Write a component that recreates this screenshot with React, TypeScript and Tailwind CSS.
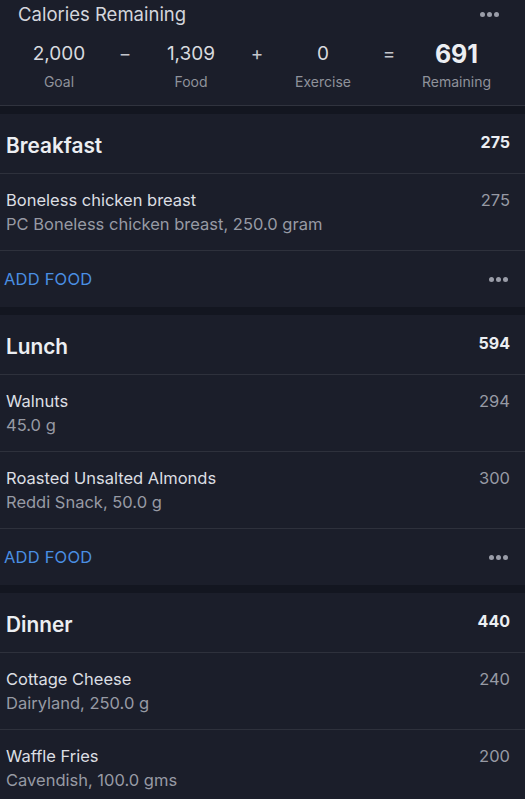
import React from "react";

const font = { fontFamily: "Inter, 'Noto Sans', sans-serif" };

function Dots({ className = "" }: { className?: string }) {
  return (
    <div className={"flex items-center gap-[2px] " + className}>
      <span className="block h-[5px] w-[5px] rounded-full bg-[#9a9da8]" />
      <span className="block h-[5px] w-[5px] rounded-full bg-[#9a9da8]" />
      <span className="block h-[5px] w-[5px] rounded-full bg-[#9a9da8]" />
    </div>
  );
}

type Item = { name: string; sub: string; cal: number };
type Meal = { title: string; total: number; items: Item[]; addFood: boolean };

const meals: Meal[] = [
  {
    title: "Breakfast",
    total: 275,
    items: [{ name: "Boneless chicken breast", sub: "PC Boneless chicken breast, 250.0 gram", cal: 275 }],
    addFood: true,
  },
  {
    title: "Lunch",
    total: 594,
    items: [
      { name: "Walnuts", sub: "45.0 g", cal: 294 },
      { name: "Roasted Unsalted Almonds", sub: "Reddi Snack, 50.0 g", cal: 300 },
    ],
    addFood: true,
  },
  {
    title: "Dinner",
    total: 440,
    items: [
      { name: "Cottage Cheese", sub: "Dairyland, 250.0 g", cal: 240 },
      { name: "Waffle Fries", sub: "Cavendish, 100.0 gms", cal: 200 },
    ],
    addFood: false,
  },
];

function Summary() {
  const cols: { v: string; l?: string; op?: boolean; bold?: boolean }[] = [
    { v: "2,000", l: "Goal" },
    { v: "−", op: true },
    { v: "1,309", l: "Food" },
    { v: "+", op: true },
    { v: "0", l: "Exercise" },
    { v: "=", op: true },
    { v: "691", l: "Remaining", bold: true },
  ];
  return (
    <div className="bg-[#1b1e2a] border-b border-[#30333e]">
      <div className="flex items-start justify-between pl-[18px] pr-[26px] pt-[2px]">
        <div className="text-[18.5px] leading-[24px] text-[#d4d6dc]">Calories Remaining</div>
        <Dots className="mt-[10px]" />
      </div>
      <div className="flex pl-[26px] pr-[34px] pt-[14px] pb-[13px]">
        {cols.map((c, i) => (
          <div key={i} className="flex-1 flex flex-col items-center">
            {c.bold ? (
              <div className="text-[25px] leading-[28px] font-bold text-[#eceef2]">{c.v}</div>
            ) : (
              <div
                className={
                  "text-[19px] leading-[28px] " + (c.op ? "text-[#c4c6cc]" : "text-[#d8dadf]")
                }
              >
                {c.v}
              </div>
            )}
            {c.l && (
              <div className="mt-[4px] text-[14px] leading-[20px] text-[#8f929b]">{c.l}</div>
            )}
          </div>
        ))}
      </div>
    </div>
  );
}

function MealCard({ meal }: { meal: Meal }) {
  return (
    <div className="bg-[#1b1e2a] mt-[8px]">
      <div className="flex h-[60px] items-center justify-between pl-[6px] pr-[15px] border-b border-[#2e313c]">
        <div className="pt-[4px] text-[20.8px] leading-[28px] font-semibold text-[#eceef2]">{meal.title}</div>
        <div className="pb-[4px] text-[16px] leading-[24px] font-bold text-[#eceef2]">{meal.total}</div>
      </div>
      {meal.items.map((it, i) => (
        <div
          key={i}
          className="flex justify-between pl-[6px] pr-[15px] pt-[14px] pb-[14px] border-b border-[#2e313c]"
        >
          <div>
            <div className="text-[16.5px] leading-[24px] text-[#dcdee3]">{it.name}</div>
            <div className="text-[16.5px] leading-[24px] text-[#979aa4]">{it.sub}</div>
          </div>
          <div className="text-[16.5px] leading-[24px] text-[#979aa4]">{it.cal}</div>
        </div>
      ))}
      {meal.addFood && (
        <div className="flex h-[56px] items-center justify-between pl-[4px] pr-[17px]">
          <div className="text-[16.5px] leading-[24px] text-[#4a8fe2] tracking-[0.2px]">ADD FOOD</div>
          <Dots className="pt-[1px]" />
        </div>
      )}
    </div>
  );
}

export default function App() {
  return (
    <div className="w-[525px] h-[799px] overflow-hidden bg-[#131620]" style={font}>
      <Summary />
      {meals.map((m) => (
        <MealCard key={m.title} meal={m} />
      ))}
    </div>
  );
}
